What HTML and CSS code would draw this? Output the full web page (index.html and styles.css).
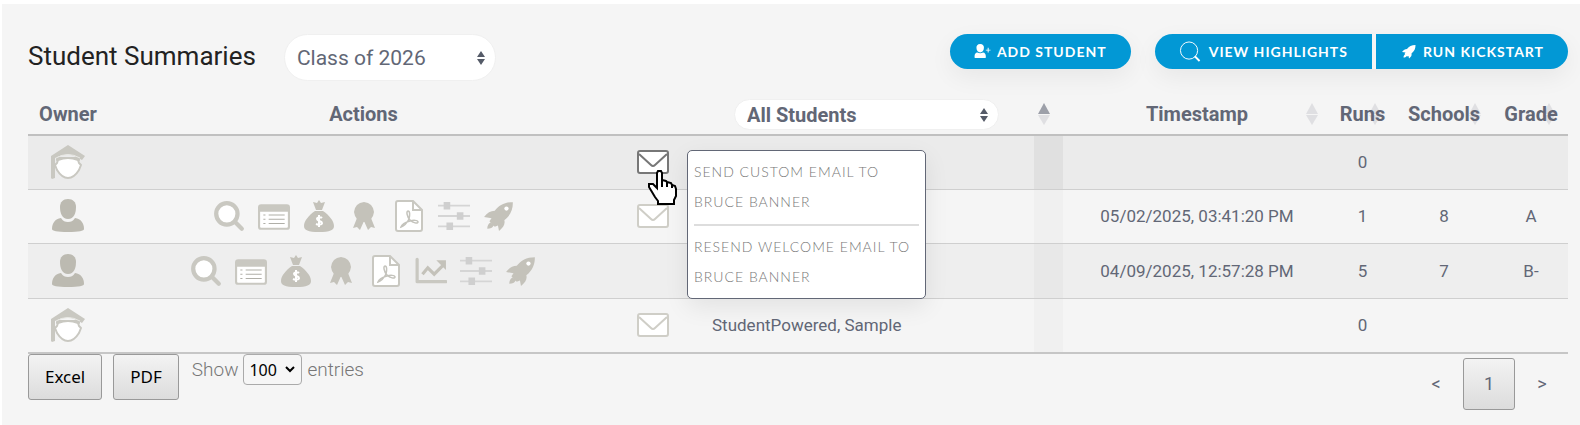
FILE: index.html
```html
<!DOCTYPE html>
<html lang="en">
<head>
  <meta charset="UTF-8">
  <meta name="viewport" content="width=device-width, initial-scale=1.0">
  <title>Student Summaries</title>
  <link rel="stylesheet" href="styles.css">
</head>
<body>

  <svg class="sprite" aria-hidden="true">
    <symbol id="grad" viewBox="0 0 34 34">
      <path d="M7 15q10-4 20 0l1 3 2 2-2 5q-5 8-11 8T6 25l-2-5 2-2z" fill="#fff" stroke="#c9c8c1" stroke-width="2" stroke-linejoin="round"/>
      <path d="M5 16q12-7 24 0v-4H5z" fill="#c9c8c1"/>
      <path d="M17 0l17 11-3 4q-14-10-27-2v20l-3 1-1-1V11z" fill="#c9c8c1"/>
      <path d="M5 13q12-7 24 0" fill="none" stroke="#e8e8e4" stroke-width="1"/>
    </symbol>
    <symbol id="user" viewBox="0 0 34 34">
      <path d="M17 0c5 0 8 3 8 8 0 6-2 12-8 12S9 14 9 8c0-5 3-8 8-8z" fill="#bcbab1"/>
      <path d="M10 19c2 3 4 4 7 4s5-1 7-4c6 1 9 5 9 11 0 2-5 3-16 3S1 32 1 30c0-6 3-10 9-11z" fill="#bcbab1"/>
    </symbol>
    <symbol id="search" viewBox="0 0 30 30">
      <path d="M20 20l7 7" stroke="#c9c8c1" stroke-width="4" stroke-linecap="round"/>
      <circle cx="13" cy="13" r="10" fill="#fff" stroke="#c9c8c1" stroke-width="4"/>
    </symbol>
    <symbol id="list" viewBox="0 0 30 30">
      <rect x="1" y="5" width="28" height="22" rx="2" fill="#fff" stroke="#c9c8c1" stroke-width="2"/>
      <path d="M1 5h28v6H1z" fill="#c9c8c1"/>
      <path d="M10 14h15M10 18h15M10 22h15M5 14h2M5 18h2M5 22h2" stroke="#b0afa8" stroke-width="1"/>
    </symbol>
    <symbol id="money" viewBox="0 0 30 32">
      <path d="M9 2l4 1 2-3 2 3 4-1-3 8h-6zM11 11h8c6 4 11 10 11 15 0 4-4 6-15 6S0 30 0 26c0-5 5-11 11-15z" fill="#c4c2ba"/>
      <path d="M18 18c-1-1-5-1-5 1s5 2 5 4-4 2-6 1M15 15v12" fill="none" stroke="#fff" stroke-width="2"/>
    </symbol>
    <symbol id="award" viewBox="-1 -1 26 32">
      <path d="M12 1l4 1 3 2 2 3 1 4-1 4-2 3-3 2-4 1-4-1-3-2-2-3-1-4 1-4 2-3 3-2z" fill="#c4c2ba"/>
      <path d="M5 17L1 27l4-1 3 3 4-9 4 9 3-3 4 1-4-10z" fill="#c4c2ba"/>
    </symbol>
    <symbol id="pdf" viewBox="0 0 28 32">
      <path d="M3 1h15l9 9v19q0 2-2 2H3q-2 0-2-2V3q0-2 2-2z" fill="#fff" stroke="#c9c8c1" stroke-width="2"/>
      <path d="M18 1v9h9" fill="none" stroke="#c9c8c1" stroke-width="2"/>
      <path d="M13 11c2 0 2 4 1 8-2 4-5 7-8 8 1-3 5-5 9-6 3-1 8-1 8 1s-5 1-8-2-4-9-2-9z" fill="none" stroke="#c4c3bc" stroke-width="1.500"/>
    </symbol>
    <symbol id="chart" viewBox="0 0 30 30">
      <path d="M2 4v21h27" fill="none" stroke="#c9c8c1" stroke-width="3" stroke-linecap="round" stroke-linejoin="round"/>
      <path d="M7 18l5-6 6 6 8-8" fill="none" stroke="#c4c2ba" stroke-width="3"/>
      <path d="M20 5h9v9z" fill="#c4c2ba"/>
    </symbol>
    <symbol id="sliders" viewBox="0 0 34 30">
      <path d="M0 4h34M0 15h34M0 26h34" stroke="#d5d5d5" stroke-width="2"/>
      <path d="M6 0h7v8H6zM20 11h7v8h-7zM9 22h7v8H9z" fill="#cfcfcf"/>
    </symbol>
    <symbol id="rocket" viewBox="-1 -1 30 30">
      <path d="M27 1c-8 0-13 3-17 8-4 0-7 2-10 6l7 1-2 3 5 5 3-1 1 5c4-3 6-6 5-10 6-5 8-10 8-17zM6 20c-2 1-3 3-3 6 3 0 5-1 6-3z" fill="currentColor"/>
      <circle cx="21" cy="7" r="2" class="window"/>
    </symbol>
    <symbol id="mail" viewBox="0 0 32 24">
      <rect x="1" y="1" width="30" height="22" rx="2" fill="#fff" stroke="currentColor" stroke-width="2"/>
      <path d="M2 4l12 11q2 2 4 0L30 4" fill="none" stroke="currentColor" stroke-width="2"/>
    </symbol>
    <symbol id="sort" viewBox="0 0 12 22">
      <path d="M6 0l6 11H0z"/>
      <path d="M0 12h12L6 22z" class="down"/>
    </symbol>
  </svg>

  <main class="panel">
    <header class="topbar">
      <h1 class="title">Student Summaries</h1>
      <select class="picker class-picker" aria-label="Class">
        <option>Class of 2026</option>
      </select>
      <div class="toolbar">
        <button class="btn">
          <svg class="btn-icon" viewBox="0 0 18 16"><path d="M6 0c3 0 4 2 4 4 0 3-2 5-4 5S2 7 2 4c0-2 1-4 4-4zM3 9c2 1 4 1 6 0 2 0 3 2 3 4v1q0 1-1 1H1q-1 0-1-1v-1c0-2 1-4 3-4zM14 4h1v2h2v1h-2v2h-1V7h-2V6h2z" fill="#fff"/></svg>
          ADD STUDENT
        </button>
        <div class="btn-group">
          <button class="btn">
            <svg class="btn-icon large" viewBox="0 0 22 22"><circle cx="10" cy="10" r="9" fill="none" stroke="#fff"/><path d="M16 16l5 5" stroke="#fff" stroke-width="2"/></svg>
            VIEW HIGHLIGHTS
          </button>
          <button class="btn">
            <svg class="btn-icon"><use href="#rocket"/></svg>
            RUN KICKSTART
          </button>
        </div>
      </div>
    </header>

    <table class="students">
      <colgroup>
        <col class="col-owner"><col class="col-actions"><col class="col-mail"><col class="col-name"><col class="col-sort"><col class="col-time"><col class="col-runs"><col class="col-schools"><col class="col-grade">
      </colgroup>
      <thead>
        <tr>
          <th>Owner</th>
          <th>Actions</th>
          <th></th>
          <th class="filter">
            <select class="picker student-picker" aria-label="Students">
              <option>All Students</option>
            </select>
          </th>
          <th class="sortable asc"><svg class="sort"><use href="#sort"/></svg></th>
          <th class="sortable">Timestamp<svg class="sort"><use href="#sort"/></svg></th>
          <th class="sortable">Runs<svg class="sort"><use href="#sort"/></svg></th>
          <th class="sortable">Schools<svg class="sort"><use href="#sort"/></svg></th>
          <th class="sortable">Grade<svg class="sort"><use href="#sort"/></svg></th>
        </tr>
      </thead>
      <tbody>
        <tr class="hovered">
          <td><svg class="owner"><use href="#grad"/></svg></td>
          <td></td>
          <td class="mail-cell">
            <button class="mail active" aria-label="Email Bruce Banner"><svg><use href="#mail"/></svg></button>
            <div class="menu">
              <a href="#">SEND CUSTOM EMAIL TO BRUCE BANNER</a>
              <a href="#">RESEND WELCOME EMAIL TO BRUCE BANNER</a>
            </div>
            <svg class="pointer" viewBox="0 0 30 38">
              <path d="M10 2h3l1 2v7l4 1 1 1 4 1 1 2 3 1 1 3v7l-2 4v4H10v-3l-3-4-3-5-3-5v-3h4l4 4V4z" fill="#fff" stroke="#000" stroke-width="2"/>
              <path d="M14 11v7M19 13v5M24 15v4" stroke="#000" stroke-width="2"/>
            </svg>
          </td>
          <td></td>
          <td></td>
          <td></td>
          <td>0</td>
          <td></td>
          <td></td>
        </tr>
        <tr>
          <td><svg class="owner"><use href="#user"/></svg></td>
          <td>
            <div class="actions">
              <button aria-label="Search"><svg><use href="#search"/></svg></button>
              <button aria-label="List"><svg><use href="#list"/></svg></button>
              <button aria-label="Costs"><svg><use href="#money"/></svg></button>
              <button aria-label="Awards"><svg><use href="#award"/></svg></button>
              <button aria-label="PDF report"><svg><use href="#pdf"/></svg></button>
              <button aria-label="Settings"><svg><use href="#sliders"/></svg></button>
              <button aria-label="Kickstart"><svg><use href="#rocket"/></svg></button>
            </div>
          </td>
          <td><button class="mail" aria-label="Email student"><svg><use href="#mail"/></svg></button></td>
          <td></td>
          <td></td>
          <td>05/02/2025, 03:41:20 PM</td>
          <td>1</td>
          <td>8</td>
          <td>A</td>
        </tr>
        <tr>
          <td><svg class="owner"><use href="#user"/></svg></td>
          <td>
            <div class="actions">
              <button aria-label="Search"><svg><use href="#search"/></svg></button>
              <button aria-label="List"><svg><use href="#list"/></svg></button>
              <button aria-label="Costs"><svg><use href="#money"/></svg></button>
              <button aria-label="Awards"><svg><use href="#award"/></svg></button>
              <button aria-label="PDF report"><svg><use href="#pdf"/></svg></button>
              <button aria-label="Progress"><svg><use href="#chart"/></svg></button>
              <button aria-label="Settings"><svg><use href="#sliders"/></svg></button>
              <button aria-label="Kickstart"><svg><use href="#rocket"/></svg></button>
            </div>
          </td>
          <td></td>
          <td></td>
          <td></td>
          <td>04/09/2025, 12:57:28 PM</td>
          <td>5</td>
          <td>7</td>
          <td>B-</td>
        </tr>
        <tr>
          <td><svg class="owner"><use href="#grad"/></svg></td>
          <td></td>
          <td><button class="mail" aria-label="Email Sample StudentPowered"><svg><use href="#mail"/></svg></button></td>
          <td class="name">StudentPowered, Sample</td>
          <td></td>
          <td></td>
          <td>0</td>
          <td></td>
          <td></td>
        </tr>
      </tbody>
    </table>

    <footer class="bottom">
      <button class="export">Excel</button>
      <button class="export">PDF</button>
      <label class="length">Show
        <select><option>100</option></select>
        entries</label>
      <nav class="pages">
        <a href="#">&lt;</a>
        <a href="#" class="current">1</a>
        <a href="#">&gt;</a>
      </nav>
    </footer>
  </main>

</body>
</html>
```
FILE: styles.css
```css
* {
  box-sizing: border-box;
}

body {
  margin: 0;
  padding: 4px 0 0 2px;
  background: #fff;
  color: #626776;
  font-family: Roboto, sans-serif;
  font-size: 17px;
}

button,
select {
  font-family: inherit;
  margin: 0;
}

.sprite {
  display: none;
}

.panel {
  background: #f5f5f5;
  padding: 30px 12px 16px 26px;
}

.topbar {
  display: flex;
  align-items: flex-start;
  height: 61px;
}

.title {
  margin: 0 28px 0 0;
  color: #222;
  font-size: 26px;
  font-weight: 400;
  line-height: 44px;
}

/* rounded drop-downs */
.picker {
  appearance: none;
  border: 1px solid #f0f0f0;
  color: #626776;
  background: #fff url("data:image/svg+xml,%3Csvg xmlns='http://www.w3.org/2000/svg' viewBox='0 0 8 14'%3E%3Cpath d='M4 0l4 6H0zM0 8h8l-4 6z' fill='%23555b68'/%3E%3C/svg%3E") no-repeat right 10px center / 8px 14px;
}

.class-picker {
  width: 212px;
  height: 47px;
  padding: 0 12px;
  border-radius: 24px;
  font-size: 21px;
}

.student-picker {
  width: 265px;
  height: 31px;
  padding: 0 12px;
  border-radius: 16px;
  font-size: 20px;
  font-weight: 700;
}

.toolbar {
  display: flex;
  gap: 24px;
  margin-left: auto;
}

.btn-group {
  display: flex;
  gap: 4px;
  border-radius: 18px;
  box-shadow: 0 8px 24px rgba(0, 0, 0, 0.06);
}

.btn {
  display: flex;
  align-items: center;
  gap: 5px;
  height: 35px;
  padding: 0 24px;
  border: none;
  border-radius: 18px;
  background: #0298d5;
  color: #fff;
  font-family: Lato, sans-serif;
  font-size: 14px;
  font-weight: 700;
  letter-spacing: 1px;
  box-shadow: 0 8px 24px rgba(0, 0, 0, 0.06);
}

.btn-group .btn {
  box-shadow: none;
}

.btn-group .btn:first-child {
  gap: 8px;
  border-radius: 18px 0 0 18px;
}

.btn-group .btn:last-child {
  border-radius: 0 18px 18px 0;
}

.btn-icon {
  width: 18px;
  height: 15px;
}

.btn-icon.large {
  width: 22px;
  height: 21px;
}

.btn .window {
  fill: #0298d5;
}

.students {
  width: 100%;
  table-layout: fixed;
  border-collapse: collapse;
  border-bottom: 2px solid #c6c6c6;
}

.col-owner { width: 80px; }
.col-mail { width: 68px; }
.col-name { width: 347px; }
.col-sort { width: 29px; }
.col-time { width: 268px; }
.col-runs { width: 63px; }
.col-schools { width: 100px; }
.col-grade { width: 74px; }

.students th {
  height: 40px;
  padding: 0 0 2px;
  border-bottom: 2px solid #c0c0c0;
  font-size: 20px;
  font-weight: 700;
}

.students .filter {
  padding: 0 0 0 12px;
}

.students td {
  height: 54px;
  padding: 0;
  border-top: 1px solid #cfcfcf;
  text-align: center;
}

.students tr:nth-child(n+3) td {
  height: 55px;
}

.students td:nth-child(5) {
  background: #f0f0f0;
}

.students tr:nth-child(3) td {
  background: #eee;
}

.students tr:nth-child(3) td:nth-child(5) {
  background: #e8e8e8;
}

.students .hovered td {
  background: #ebebeb;
}

.students .hovered td:nth-child(5) {
  background: #e0e0e0;
}

.students .name {
  padding-left: 25px;
  text-align: left;
}

.sortable {
  position: relative;
}

.sort {
  position: absolute;
  top: 8px;
  right: 13px;
  width: 12px;
  height: 22px;
  fill: #62677626;
}

.asc .sort {
  fill: #62677699;
}

.down {
  fill: #62677626;
}

.owner {
  display: block;
  width: 34px;
  height: 34px;
  margin: 0 auto;
}

.actions {
  display: flex;
  justify-content: center;
  gap: 13px;
}

.actions button,
.mail {
  padding: 0;
  border: none;
  background: none;
  color: #c4c2ba;
}

.actions svg {
  display: block;
  width: 32px;
  height: 32px;
}

.window {
  fill: #fff;
}

.mail {
  display: block;
  margin: 0 auto;
  color: #cfcec7;
}

.mail.active {
  color: #777;
}

.mail svg {
  display: block;
  width: 32px;
  height: 24px;
}

.mail-cell {
  position: relative;
}

/* e-mail menu, opens over the rows below */
.menu {
  position: absolute;
  z-index: 1;
  top: 14px;
  left: 68px;
  width: 239px;
  padding: 6px;
  border: 1px solid #626776;
  border-radius: 5px;
  background: #fff;
  box-shadow: 0 8px 24px rgba(0, 0, 0, 0.08);
  text-align: left;
}

.menu a {
  display: block;
  color: #777;
  font-family: Lato, sans-serif;
  font-size: 14px;
  font-weight: 300;
  line-height: 30px;
  letter-spacing: 1px;
  text-decoration: none;
}

.menu a + a {
  margin-top: 7px;
  padding-top: 6px;
  border-top: 2px solid #ddd;
}

.pointer {
  position: absolute;
  z-index: 2;
  top: 33px;
  left: 29px;
  width: 30px;
  height: 38px;
}

.bottom {
  display: flex;
  align-items: flex-start;
}

.export {
  height: 46px;
  margin-right: 11px;
  padding: 0 16px 2px;
  border: 1px solid #999;
  border-radius: 3px;
  background: linear-gradient(#f3f3f3, #dcdcdc);
  color: #000;
  font-family: "Noto Sans", sans-serif;
  font-size: 17px;
}

.length {
  display: flex;
  align-items: center;
  gap: 5px;
  margin-left: 2px;
  color: #777;
  font-size: 19px;
  font-weight: 300;
}

.length select {
  appearance: none;
  width: 59px;
  height: 31px;
  padding: 0 5px;
  border: 1px solid #aaa;
  border-radius: 4px;
  background: #f6f6f6 url("data:image/svg+xml,%3Csvg xmlns='http://www.w3.org/2000/svg' viewBox='0 0 10 7'%3E%3Cpath d='M1 1l4 4 4-4' fill='none' stroke='%23000' stroke-width='2'/%3E%3C/svg%3E") no-repeat right 6px center / 10px 7px;
  color: #000;
  font-family: "Noto Sans", sans-serif;
  font-size: 16px;
}

.pages {
  display: flex;
  gap: 1px;
  margin: 4px 0 0 auto;
}

.pages a {
  width: 52px;
  border: 1px solid transparent;
  border-radius: 3px;
  color: #626776;
  font-size: 18px;
  line-height: 50px;
  text-align: center;
  text-decoration: none;
}

.pages .current {
  border-color: #999;
  background: linear-gradient(#f3f3f3, #dcdcdc);
}
```
